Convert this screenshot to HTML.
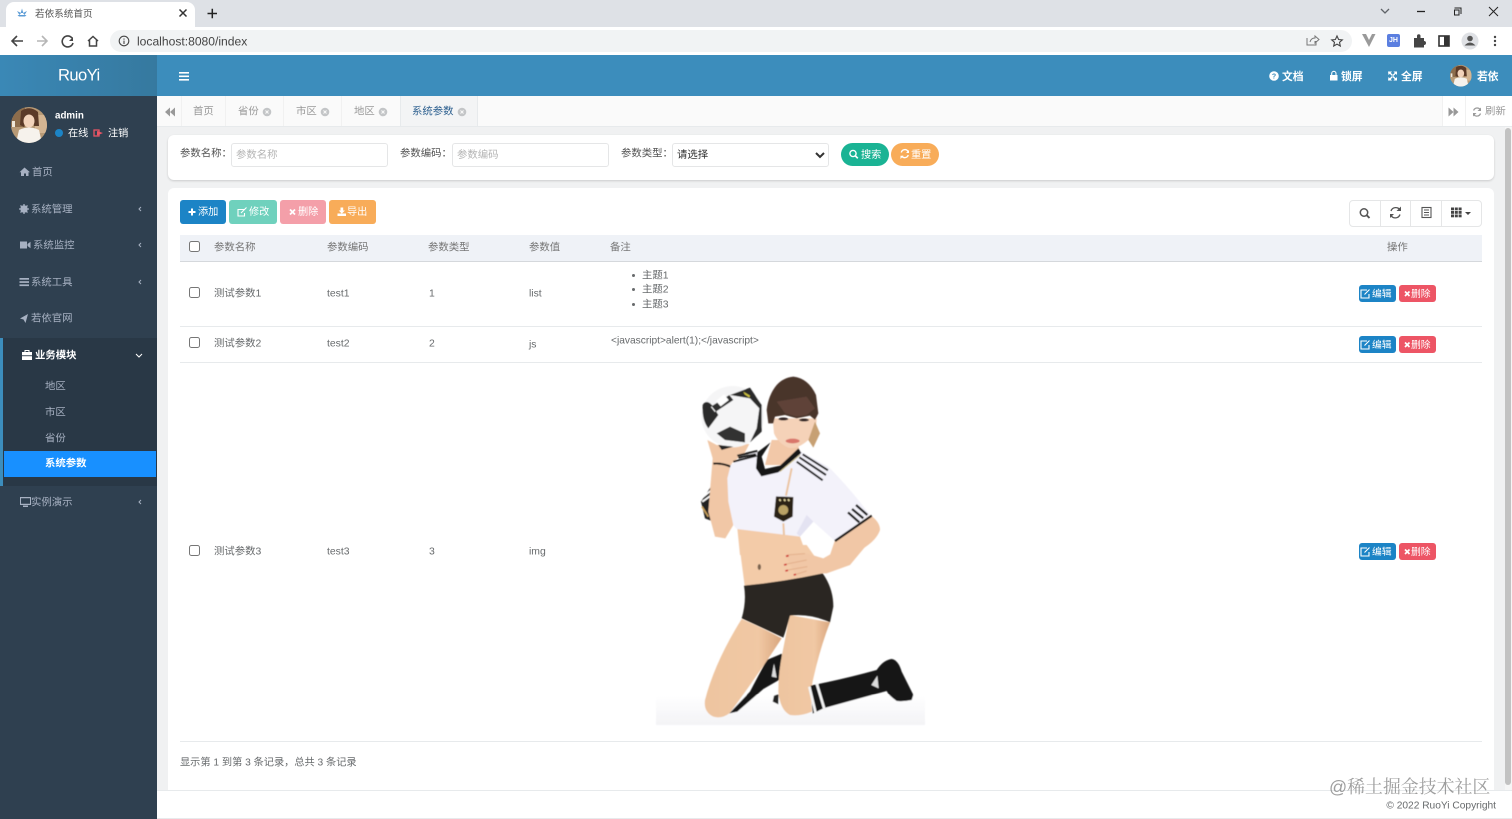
<!DOCTYPE html>
<html lang="zh"><head><meta charset="utf-8"><title>若依系统首页</title>
<style>
html,body{margin:0;padding:0;width:1512px;height:819px;overflow:hidden;background:#f0f1f2}
body{font-family:"Liberation Sans","Noto Sans CJK SC",sans-serif;font-size:10.4px;color:#676a6c;position:relative}
.b{position:absolute;box-sizing:border-box}
.t{position:absolute;transform:translateY(calc(-50% + 2.5px));white-space:nowrap;line-height:1.2}
.side{color:#a7b1c2;font-size:10.4px}
.w{color:#fff;font-weight:bold}
.wb{position:absolute;box-sizing:border-box;color:#fff;font-size:10.2px;border-radius:3px;text-align:left;white-space:nowrap;padding-top:1px}
input.i,select.i{position:absolute;box-sizing:border-box;height:24px;width:157px;border:1px solid #e5e6e7;border-radius:3px;background:#fff;font:10.4px "Liberation Sans","Noto Sans CJK SC",sans-serif;padding:0 4px;margin:0;outline:none;color:#333}
input.i::placeholder{color:#b5b5b5}
input.c{position:absolute;margin:0;width:11px;height:11px}
svg{position:absolute;left:0;top:0;pointer-events:none}
</style></head><body>

<!-- browser chrome -->
<div class="b" style="left:0;top:0;width:1512px;height:27px;background:#dee1e6"></div>
<div class="b" style="left:6px;top:2px;width:189px;height:25px;background:#fff;border-radius:8px 8px 0 0"></div>
<div class="b" style="left:0;top:27px;width:1512px;height:28px;background:#fff"></div>
<div class="b" style="left:110px;top:30px;width:1242px;height:22px;background:#f1f3f4;border-radius:11px"></div>
<div class="t" style="left:35px;top:12px;font-size:9.6px;color:#555">若依系统首页</div>
<div class="t" style="left:137px;top:38.5px;font-size:12.1px;color:#444">localhost:8080/index</div>
<div class="b" style="left:1387px;top:34px;width:13px;height:13px;background:#5b7fe0;border-radius:2px;color:#fff;font-size:7px;font-weight:bold;text-align:center;line-height:13px">JH</div>

<!-- header -->
<div class="b" style="left:0;top:55px;width:1512px;height:41px;background:#3c8dbc"></div>
<div class="b" style="left:0;top:55px;width:157px;height:41px;background:linear-gradient(90deg,#3a88b6,#36799f)"></div>
<div class="t" style="left:58px;top:73px;font-size:16.6px;color:#fff;letter-spacing:-.6px">RuoYi</div>
<div class="t w" style="left:1282px;top:75px;font-size:10.8px">文档</div>
<div class="t w" style="left:1341px;top:75px;font-size:10.8px">锁屏</div>
<div class="t w" style="left:1401px;top:75px;font-size:10.8px">全屏</div>
<div class="t w" style="left:1477px;top:75px;font-size:10.8px">若依</div>

<!-- sidebar -->
<div class="b" style="left:0;top:96px;width:157px;height:723px;background:#2f4050"></div>
<div class="b" style="left:0;top:338px;width:157px;height:148px;background:#293846;border-left:3px solid #3c8dbc"></div>
<div class="b" style="left:4px;top:451px;width:152px;height:26px;background:#1890ff"></div>
<div class="t w" style="left:55px;top:114px;font-size:9.8px">admin</div>
<div class="t" style="left:68px;top:131.500px;color:#fff;font-size:10.2px">在线</div>
<div class="t" style="left:108px;top:131.500px;color:#fff;font-size:10.2px">注销</div>
<div class="t side" style="left:32px;top:170.500px">首页</div>
<div class="t side" style="left:31px;top:207.500px">系统管理</div>
<div class="t side" style="left:33px;top:243.500px">系统监控</div>
<div class="t side" style="left:31px;top:280.500px">系统工具</div>
<div class="t side" style="left:31px;top:316.500px">若依官网</div>
<div class="t w" style="left:35px;top:353.500px;font-size:10.4px">业务模块</div>
<div class="t side" style="left:45px;top:384.500px">地区</div>
<div class="t side" style="left:45px;top:410.500px">市区</div>
<div class="t side" style="left:45px;top:436.500px">省份</div>
<div class="t w" style="left:45px;top:461.500px;font-size:10.4px">系统参数</div>
<div class="t side" style="left:31px;top:500.500px">实例演示</div>

<!-- tabs -->
<div class="b" style="left:157px;top:96px;width:1355px;height:31px;background:#fafafa;border-bottom:1px solid #e7eaec"></div>
<div class="b" style="left:400px;top:96px;width:78px;height:30px;background:#f3f4f5;border-left:1px solid #e7eaec;border-right:1px solid #e7eaec"></div>
<div class="b" style="left:181px;top:96px;width:1px;height:30px;background:#f1f1f1"></div>
<div class="b" style="left:225px;top:96px;width:1px;height:30px;background:#f1f1f1"></div>
<div class="b" style="left:283px;top:96px;width:1px;height:30px;background:#f1f1f1"></div>
<div class="b" style="left:341px;top:96px;width:1px;height:30px;background:#f1f1f1"></div>
<div class="b" style="left:1442px;top:96px;width:70px;height:30px;background:#fff;border-left:1px solid #f1f1f1"></div>
<div class="b" style="left:1465px;top:96px;width:1px;height:30px;background:#f1f1f1"></div>
<div class="t" style="left:193px;top:110px;color:#999">首页</div>
<div class="t" style="left:238px;top:110px;color:#999">省份</div>
<div class="t" style="left:296px;top:110px;color:#999">市区</div>
<div class="t" style="left:354px;top:110px;color:#999">地区</div>
<div class="t" style="left:412px;top:110px;color:#2c5f8f">系统参数</div>
<div class="t" style="left:1485px;top:110px;color:#999">刷新</div>

<!-- search card -->
<div class="b" style="left:168px;top:135px;width:1326px;height:45px;background:#fff;border-radius:6px;box-shadow:0 1px 2px rgba(0,0,0,.16)"></div>
<div class="t" style="left:180px;top:151.500px;color:#555">参数名称：</div>
<input class="i" style="left:231px;top:143px" placeholder="参数名称">
<div class="t" style="left:400px;top:151.500px;color:#555">参数编码：</div>
<input class="i" style="left:452px;top:143px" placeholder="参数编码">
<div class="t" style="left:621px;top:151.500px;color:#555">参数类型：</div>
<select class="i" style="left:672px;top:143px;padding:0"><option>请选择</option></select>
<div class="wb" style="left:841px;top:143px;width:48px;height:23px;background:#1ab394;border-radius:12px;line-height:23px;padding-left:20px">搜索</div>
<div class="wb" style="left:891px;top:143px;width:48px;height:23px;background:#f8ac59;border-radius:12px;line-height:23px;padding-left:20px">重置</div>

<!-- table card -->
<div class="b" style="left:168px;top:188px;width:1326px;height:602px;background:#fff;border-radius:6px 6px 0 0"></div>
<div class="wb" style="left:180px;top:200px;width:46px;height:24px;background:#1c84c6;line-height:24px;padding-left:18px">添加</div>
<div class="wb" style="left:229px;top:200px;width:48px;height:24px;background:#6fd1bd;line-height:24px;padding-left:20px">修改</div>
<div class="wb" style="left:280px;top:200px;width:46px;height:24px;background:#f49fa9;line-height:24px;padding-left:18px">删除</div>
<div class="wb" style="left:329px;top:200px;width:47px;height:24px;background:#f8ac59;line-height:24px;padding-left:18px">导出</div>

<div class="b" style="left:1349px;top:200px;width:133px;height:27px;border:1px solid #e5e6e7;border-radius:4px;background:#fff"></div>
<div class="b" style="left:1380px;top:200px;width:1px;height:27px;background:#e5e6e7"></div>
<div class="b" style="left:1410px;top:200px;width:1px;height:27px;background:#e5e6e7"></div>
<div class="b" style="left:1441px;top:200px;width:1px;height:27px;background:#e5e6e7"></div>

<div class="b" style="left:180px;top:235px;width:1302px;height:27px;background:#eff2f7;border-bottom:1px solid #d5d8dc"></div>
<input type="checkbox" class="c" style="left:189px;top:241px">
<div class="t" style="left:214px;top:245.500px;color:#777">参数名称</div>
<div class="t" style="left:327px;top:245.500px;color:#777">参数编码</div>
<div class="t" style="left:428px;top:245.500px;color:#777">参数类型</div>
<div class="t" style="left:529px;top:245.500px;color:#777">参数值</div>
<div class="t" style="left:610px;top:245.500px;color:#777">备注</div>
<div class="t" style="left:1387px;top:245.500px;color:#777">操作</div>

<div class="b" style="left:180px;top:326px;width:1302px;height:1px;background:#e7eaec"></div>
<div class="b" style="left:180px;top:362px;width:1302px;height:1px;background:#e7eaec"></div>
<div class="b" style="left:180px;top:741px;width:1302px;height:1px;background:#e7eaec"></div>

<input type="checkbox" class="c" style="left:189px;top:287px">
<div class="t" style="left:214px;top:291.500px">测试参数1</div>
<div class="t" style="left:327px;top:291.500px">test1</div>
<div class="t" style="left:429px;top:291.500px">1</div>
<div class="t" style="left:529px;top:291.500px">list</div>
<div class="t" style="left:642px;top:273.500px">主题1</div>
<div class="t" style="left:642px;top:287.500px">主题2</div>
<div class="t" style="left:642px;top:302.500px">主题3</div>
<div class="b" style="left:632px;top:274px;width:3px;height:3px;border-radius:50%;background:#676a6c"></div>
<div class="b" style="left:632px;top:288px;width:3px;height:3px;border-radius:50%;background:#676a6c"></div>
<div class="b" style="left:632px;top:303px;width:3px;height:3px;border-radius:50%;background:#676a6c"></div>
<div class="wb" style="left:1359px;top:285px;width:37px;height:17px;background:#1c84c6;line-height:18px;padding-left:13px;font-size:9.8px">编辑</div>
<div class="wb" style="left:1399px;top:285px;width:37px;height:17px;background:#ed5565;line-height:18px;padding-left:12px;font-size:9.8px">删除</div>

<input type="checkbox" class="c" style="left:189px;top:337px">
<div class="t" style="left:214px;top:341.500px">测试参数2</div>
<div class="t" style="left:327px;top:341.500px">test2</div>
<div class="t" style="left:429px;top:341.500px">2</div>
<div class="t" style="left:529px;top:342.500px">js</div>
<div class="t" style="left:611px;top:338.500px;font-size:10.2px">&lt;javascript&gt;alert(1);&lt;/javascript&gt;</div>
<div class="wb" style="left:1359px;top:336px;width:37px;height:17px;background:#1c84c6;line-height:18px;padding-left:13px;font-size:9.8px">编辑</div>
<div class="wb" style="left:1399px;top:336px;width:37px;height:17px;background:#ed5565;line-height:18px;padding-left:12px;font-size:9.8px">删除</div>

<input type="checkbox" class="c" style="left:189px;top:545px">
<div class="t" style="left:214px;top:549.500px">测试参数3</div>
<div class="t" style="left:327px;top:549.500px">test3</div>
<div class="t" style="left:429px;top:549.500px">3</div>
<div class="t" style="left:529px;top:549.500px">img</div>
<div class="wb" style="left:1359px;top:543px;width:37px;height:17px;background:#1c84c6;line-height:18px;padding-left:13px;font-size:9.8px">编辑</div>
<div class="wb" style="left:1399px;top:543px;width:37px;height:17px;background:#ed5565;line-height:18px;padding-left:12px;font-size:9.8px">删除</div>

<div class="t" style="left:180px;top:760.500px;font-size:10.2px">显示第 1 到第 3 条记录，总共 3 条记录</div>

<!-- footer -->
<div class="b" style="left:157px;top:790px;width:1355px;height:29px;background:#fff;border-top:1px solid #e7eaec;border-bottom:1px solid #e7eaec"></div>
<div class="t" style="right:16px;top:803.500px;font-size:10.2px;color:#676a6c">© 2022 RuoYi Copyright</div>

<!-- scrollbar -->
<div class="b" style="left:1505px;top:127px;width:7px;height:663px;background:#f6f6f6"></div>
<div class="b" style="left:1505px;top:128px;width:6px;height:657px;background:#c2c2c2;border-radius:3px"></div>

<svg width="1512" height="819" viewBox="0 0 1512 819">
<defs>
<clipPath id="cp"><circle cx="18" cy="18" r="18"/></clipPath>
<g id="av" clip-path="url(#cp)">
<rect width="36" height="36" fill="#b89a76"/>
<rect x="0" y="0" width="14" height="20" fill="#8d6d4c"/>
<rect x="24" y="8" width="12" height="18" fill="#d4b592"/>
<path d="M10 4 Q19 -2 27 5 L28 19 L23 19 L22 10 L14 10 L13 20 L9 18Z" fill="#5b3a28"/>
<ellipse cx="18" cy="14" rx="5.5" ry="6.5" fill="#f2d3bb"/>
<path d="M5 36 L8 23 Q18 18 28 23 L31 36Z" fill="#f6f2ec"/>
<rect x="1" y="14" width="3" height="6" fill="#efe8da"/>
</g>
<linearGradient id="floor" x1="0" y1="0" x2="0" y2="1"><stop offset="0" stop-color="#fff"/><stop offset="1" stop-color="#f3f3f6"/></linearGradient>
<linearGradient id="leg" x1="0" y1="0" x2="1" y2="0"><stop offset="0" stop-color="#eec5a0"/><stop offset=".7" stop-color="#f1c8a4"/><stop offset="1" stop-color="#d9a67e"/></linearGradient>
<filter id="bl"><feGaussianBlur stdDeviation=".5"/></filter>
</defs>

<!-- chrome icons -->
<g fill="none" stroke="#5f6368" stroke-width="1.3">
<path d="M179.500 9.500 L186.500 16.500 M186.500 9.500 L179.500 16.500" stroke="#333" stroke-width="1.500"/>
<path d="M207.500 13.500 H217 M212.300 8.700 V18.300" stroke="#222" stroke-width="1.5"/>
<path d="M1381 9 L1385 13 L1389 9"/>
<path d="M1417 11.500 H1425" stroke="#222"/>
<path d="M1454.500 8 H1461 V14 M1454.500 10 H1459 V15 H1454.500Z" stroke="#222" stroke-width="1"/>
<path d="M1489 7 L1498 16 M1498 7 L1489 16" stroke="#222" stroke-width="1"/>
<path d="M23 41 H12 M17 36 L12 41 L17 46" stroke="#444" stroke-width="1.6"/>
<path d="M37 41 H47 M42 36 L47 41 L42 46" stroke="#b6b6b6" stroke-width="1.6"/>
<path d="M72 38 A5.500 5.500 0 1 0 73 43" stroke="#444" stroke-width="1.6"/>
<path d="M88 41 L93 36.500 L98 41 M89.500 40 V46 H96.500 V40" stroke="#444" stroke-width="1.5"/>
<circle cx="124" cy="41" r="4.800" stroke="#444" stroke-width="1.100"/>
<path d="M1307 38 V45 H1316 V41 M1310 42 Q1311 38 1315 38 V36 L1319 39.500 L1315 43 V41" stroke="#777" stroke-width="1"/>
<path d="M1337 36 L1338.600 39.500 L1342.300 39.900 L1339.500 42.300 L1340.300 46 L1337 44.100 L1333.700 46 L1334.500 42.300 L1331.700 39.900 L1335.400 39.500Z" stroke="#444" stroke-width="1.100"/>
</g>
<path d="M73 37 V41 H69Z" fill="#444"/>
<path d="M124 38.500 V39.600 M124 40.600 V44" stroke="#444" stroke-width="1.100"/>
<g fill="#5b9bd5"><path d="M22 8.500 L23.300 13 L20.700 13Z"/><path d="M17 11 L21 13 L19.500 15 Z"/><path d="M27 11 L23 13 L24.500 15Z"/><path d="M17.500 15 H26.500 L25 16.500 H19Z"/></g>
<path d="M1362 34 L1375.500 34 L1369 47Z M1366 34 L1369 40 L1372 34Z" fill="#9a9a9a" fill-rule="evenodd"/>
<path d="M1414 38 H1417 V36 A1.700 1.700 0 0 1 1420.500 36 V38 H1424 V41 A1.700 1.700 0 0 1 1424 45 V47.500 H1414Z" fill="#444"/>
<rect x="1439" y="36" width="10" height="10" fill="none" stroke="#333" stroke-width="1.600"/><rect x="1444" y="36" width="5" height="10" fill="#333"/>
<circle cx="1470" cy="41" r="8.500" fill="#dfe1e5"/><circle cx="1470" cy="38.500" r="2.800" fill="#555"/><path d="M1464.500 45.500 Q1470 39.500 1475.500 45.500Z" fill="#555"/>
<g fill="#444"><circle cx="1495" cy="37" r="1.200"/><circle cx="1495" cy="41" r="1.200"/><circle cx="1495" cy="45" r="1.200"/></g>

<!-- header icons -->
<g fill="#fff">
<rect x="179" y="72" width="10" height="1.600"/><rect x="179" y="75.500" width="10" height="1.600"/><rect x="179" y="79" width="10" height="1.600"/>
<circle cx="1274" cy="76" r="4.800"/>
<path d="M1331 75 H1337.500 V80.500 H1330 V75Z"/>
<path d="M1388 71.500 H1392 L1390.800 72.900 L1393 75 L1392 76 L1389.800 73.800 L1388.500 75 Z M1397 71.500 H1393.500 L1394.700 72.900 L1392.500 75 L1393.500 76 L1395.700 73.800 L1397 75Z M1388 80.500 H1392 L1390.800 79.100 L1393 77 L1392 76 L1389.800 78.200 L1388.500 77Z M1397 80.500 H1393.500 L1394.700 79.100 L1392.500 77 L1393.500 76 L1395.700 78.200 L1397 77Z"/>
</g>
<path d="M1331.700 75.200 V73.500 A2 2 0 0 1 1336 73.500 V75.200" fill="none" stroke="#fff" stroke-width="1.100"/>
<text x="1274" y="78.500" text-anchor="middle" font-size="7" font-weight="bold" fill="#3c8dbc" font-family="Liberation Sans">?</text>
<use href="#av" transform="translate(1450,65) scale(.6)"/>

<!-- sidebar icons -->
<use href="#av" transform="translate(11,107)"/>
<circle cx="59" cy="133" r="4" fill="#1c84c6"/>
<path d="M94 130 H99 V136 H94 Z" fill="none" stroke="#ed5565" stroke-width="1.300"/><path d="M97 131 L103 133 L97 135.500 Z" fill="#ed5565"/>
<g fill="#a7b1c2">
<path d="M24.500 167.500 L19.500 172.300 H21 V176 H24 V173.500 H26 V176 H28.500 V172.300 H30Z"/>
<circle cx="24" cy="209" r="3.700"/><g stroke="#a7b1c2" stroke-width="1.300"><path d="M24 204 V214 M19 209 H29 M20.500 205.500 L27.500 212.500 M27.500 205.500 L20.500 212.500"/></g>
<path d="M20 241.500 H27 V248.500 H20Z M27.500 244 L30.500 241.800 V248.200 L27.500 246Z"/>
<rect x="19.500" y="278" width="9.500" height="1.700"/><rect x="19.500" y="281.200" width="9.500" height="1.700"/><rect x="19.500" y="284.400" width="9.500" height="1.700"/>
<path d="M28 314 L20 318.500 L23.500 319.500 L25.500 323Z"/>
<path d="M20 497 H31 V505 H20Z M21 498.300 H30 V503.700 H21Z" fill-rule="evenodd"/><path d="M23 505.500 H28 V507 H23Z"/>
</g>
<g fill="none" stroke="#a7b1c2" stroke-width="1">
<path d="M141 207 L139 209 L141 211"/><path d="M141 243 L139 245 L141 247"/><path d="M141 280 L139 282 L141 284"/><path d="M141 500 L139 502 L141 504"/>
<path d="M136 354 L139 357 L142 354" stroke="#fff"/>
</g>
<path d="M22 352 H32 V360 H22Z" fill="#fff"/><path d="M25 352 V350.500 H29 V352" stroke="#fff" fill="none"/><rect x="22" y="355.300" width="10" height=".9" fill="#293846"/>

<!-- tab icons -->
<g fill="#999">
<path d="M170 107.500 V116.500 L165 112Z M175 107.500 V116.500 L170 112Z"/>
<path d="M1448.500 107.500 V116.500 L1453.500 112Z M1453.500 107.500 V116.500 L1458.500 112Z"/>
</g>
<g fill="#c3c5c7"><circle cx="267" cy="112" r="4.300"/><circle cx="325" cy="112" r="4.300"/><circle cx="383" cy="112" r="4.300"/><circle cx="462" cy="112" r="4.300"/></g>
<g stroke="#fafafa" stroke-width="1"><path d="M265.500 110.500 L268.500 113.500 M268.500 110.500 L265.500 113.500"/><path d="M323.500 110.500 L326.500 113.500 M326.500 110.500 L323.500 113.500"/><path d="M381.500 110.500 L384.500 113.500 M384.500 110.500 L381.500 113.500"/><path d="M460.500 110.500 L463.500 113.500 M463.500 110.500 L460.500 113.500"/></g>
<g fill="none" stroke="#999" stroke-width="1.200"><path d="M1480.500 110 A3.800 3.800 0 0 0 1473.600 110.500 M1473.500 114 A3.800 3.800 0 0 0 1480.500 113.500"/></g>
<path d="M1481 107.500 V111 H1477.500Z M1473 116.500 V113 H1476.500Z" fill="#999"/>

<!-- button icons -->
<g fill="none" stroke="#fff" stroke-width="1.400">
<circle cx="853" cy="153.500" r="3.100"/><path d="M855.300 155.800 L857.800 158.300" stroke-width="1.700"/>
<path d="M908 151.500 A3.600 3.600 0 0 0 901.300 152.500 M901.700 156 A3.600 3.600 0 0 0 908.200 155"/>
<path d="M188.500 212 H195.500 M192 208.500 V215.500" stroke-width="2"/>
<path d="M245 209.500 H238 V216 H244.500 V213 M241 213 L246.500 207.500" stroke-width="1.100"/>
<path d="M290 209.500 L295 214.500 M295 209.500 L290 214.500" stroke-width="1.800"/>
<path d="M1367 290 H1361 V298 H1369 V294 M1364.500 294.500 L1369.500 289.500" stroke-width="1.100"/>
<path d="M1367 341 H1361 V349 H1369 V345 M1364.500 345.500 L1369.500 340.500" stroke-width="1.100"/>
<path d="M1367 548 H1361 V556 H1369 V552 M1364.500 552.500 L1369.500 547.500" stroke-width="1.100"/>
<path d="M1405 291.500 L1409.500 296 M1409.500 291.500 L1405 296" stroke-width="1.700"/>
<path d="M1405 342.500 L1409.500 347 M1409.500 342.500 L1405 347" stroke-width="1.700"/>
<path d="M1405 549.500 L1409.500 554 M1409.500 549.500 L1405 554" stroke-width="1.700"/>
</g>
<path d="M909 150 V153 H906Z M900.500 159 V155.700 H903.500Z" fill="#fff"/>
<path d="M337.500 213.500 H346 V216 H337.500Z M340.500 207.500 H343.200 V210.500 H345 L341.800 213.600 L338.700 210.500 H340.500Z" fill="#fff"/>

<!-- toolbar icons -->
<g fill="none" stroke="#555">
<circle cx="1364" cy="212.500" r="3.700" stroke-width="1.500"/><path d="M1366.800 215.300 L1369.500 218" stroke-width="1.900"/>
<path d="M1400 210 A5 5 0 0 0 1391 211 M1391 215.500 A5 5 0 0 0 1400 214.500" stroke-width="1.300"/>
<rect x="1422" y="207.500" width="9" height="10" stroke-width="1.100"/><path d="M1424 210 H1429 M1424 212.500 H1429 M1424 215 H1429" stroke-width="1"/>
</g>
<path d="M1401 206.500 V211 H1396.500Z M1390 218 V214 H1394Z" fill="#555"/>
<g fill="#444"><rect x="1451" y="207.500" width="3" height="2.800"/><rect x="1454.800" y="207.500" width="3" height="2.800"/><rect x="1458.600" y="207.500" width="3" height="2.800"/><rect x="1451" y="211" width="3" height="2.800"/><rect x="1454.800" y="211" width="3" height="2.800"/><rect x="1458.600" y="211" width="3" height="2.800"/><rect x="1451" y="214.500" width="3" height="2.800"/><rect x="1454.800" y="214.500" width="3" height="2.800"/><rect x="1458.600" y="214.500" width="3" height="2.800"/><path d="M1465 212 H1471 L1468 215Z"/></g>

<!-- photo -->
<g filter="url(#bl)">
<rect x="656" y="695" width="269" height="30" fill="url(#floor)"/>
<g transform="translate(650,365) scale(.33333)">
  <!-- back sleeve -->
  <path d="M153 410 L185 362 L190 470 L165 460Z" fill="#222"/>
  <path d="M160 395 L185 375 M157 410 L182 392" stroke="#fff" stroke-width="5"/>
  <path d="M156 425 L175 455" stroke="#c9a05c" stroke-width="5"/>
  <!-- raised arm -->
  <path d="M172 225 L200 240 L298 237 L285 262 L245 295 L236 400 L250 480 L226 520 L195 515 L175 440 L188 280Z" fill="#f1c7a6"/>
  <path d="M190 296 Q215 293 242 305" stroke="#111" stroke-width="6" fill="none"/>
  <!-- ball -->
  <ellipse cx="248" cy="155" rx="94" ry="92" fill="#f5f5f6"/>
  <path d="M158 120 Q170 100 190 125 L205 150 L175 190 Q155 165 158 120Z" fill="#2b2b2b"/>
  <path d="M200 205 L240 185 L285 205 L285 232 L225 225Z" fill="#333"/>
  <path d="M240 90 L300 68 L335 120 L335 200 L300 232 L320 190 L328 130 L300 100Z" fill="#2b2b2b"/>
  <path d="M178 128 L238 90 L250 105 L190 145Z" fill="#2e2e2e"/>
  <path d="M184 125 L196 140 M200 108 L222 90 L234 105 L212 122Z" stroke="#fff" stroke-width="3" fill="#fff"/>
  <path d="M280 80 L300 92 L298 98 L284 88Z" fill="#cfc43f"/>
  <path d="M205 240 L250 245 L215 255Z" fill="#222"/>
  <!-- right arm -->
  <path d="M660 450 Q690 470 690 495 Q680 525 640 550 L590 570 L540 570 L555 525Z" fill="#f1c7a6"/>
  <!-- waist -->
  <path d="M262 490 L448 510 L470 570 L270 570Z" fill="#f3cba8"/>
  <path d="M410 570 L440 563 L465 570Z" fill="#c94040"/>
  <!-- neck -->
  <path d="M365 225 L440 225 L450 262 L395 300 L345 300Z" fill="#f2c8a8"/>
  <!-- shirt -->
  <path d="M242 300 L320 255 L345 315 L395 300 L450 258 L535 305 Q600 370 660 450 L555 528 L490 470 L450 515 L260 492 L250 480 L235 410 L232 340Z" fill="#f3f2fa"/>
  <path d="M490 470 L450 515 L440 505 L470 450Z" fill="#e4e3f2"/>
  <!-- collar -->
  <path d="M362 232 L322 262 L318 310 L334 334 L385 322 L454 264 L445 250 L390 302 L345 312 L335 275Z" fill="#141414"/>
  <path d="M390 320 L450 270" stroke="#c9b45a" stroke-width="2"/>
  <!-- shoulder stripes -->
  <g stroke="#161616" stroke-width="6"><path d="M440 290 L518 346"/><path d="M448 277 L528 330"/><path d="M458 268 L534 316"/><path d="M262 272 L322 258"/><path d="M265 278 L318 268"/><path d="M250 290 L320 272"/></g>
  <!-- sleeve stripes -->
  <g stroke="#161616" stroke-width="7"><path d="M594 442 L628 472"/><path d="M606 432 L640 460"/><path d="M618 420 L652 450"/></g>
  <path d="M555 528 L665 452" stroke="#161616" stroke-width="7"/>
  <!-- crest -->
  <path d="M378 394 L430 396 L428 455 L400 470 L372 455Z" fill="#2a2318"/>
  <circle cx="400" cy="435" r="15" fill="#b9a265"/>
  <path d="M388 403 L392 408 M402 403 L406 408 M414 403 L418 408" stroke="#e9dca2" stroke-width="5"/>
  <path d="M425 310 L408 392 M400 475 L402 510" stroke="#ebc5a0" stroke-width="6"/>
  <!-- face/hair -->
  <path d="M368 160 L500 160 Q500 200 475 225 Q440 255 415 248 Q385 235 372 205Z" fill="#f5d2b8"/>
  <path d="M430 35 Q400 38 380 60 Q355 90 350 135 L355 175 L370 175 L375 155 L405 150 L440 160 L480 152 L495 165 L505 145 L498 90 Q475 40 430 35Z" fill="#4a342c"/>
  <path d="M380 110 L470 95 L495 130 L470 150 L440 155 L405 145Z" fill="#5e4237"/>
  <path d="M495 170 L510 205 L490 248 L475 225Z" fill="#c7a073"/>
  <ellipse cx="400" cy="162" rx="15" ry="4.500" fill="#2d2120"/><ellipse cx="462" cy="165" rx="15" ry="4.500" fill="#2d2120"/>
  <ellipse cx="428" cy="228" rx="21" ry="7" fill="#d9766b"/>
</g>
<g transform="translate(650,545) scale(.33333)">
  <!-- torso low -->
  <path d="M268 0 L470 0 L505 50 L520 90 L285 130 Z" fill="#f3cba8"/>
  <!-- arm and hand -->
  <path d="M405 30 L470 25 L520 40 L590 0 L650 0 L600 60 L530 85 L500 85 L440 95Z" fill="#f1c7a6"/>
  <path d="M410 30 L465 26 M405 58 L470 45 M408 76 L472 65 M432 90 L470 78" stroke="#e3b08c" stroke-width="3"/>
  <g stroke="#cf3030" stroke-width="5"><path d="M408 34 L416 32"/><path d="M402 60 L410 58"/><path d="M406 78 L414 76"/><path d="M431 90 L438 88"/></g>
  <ellipse cx="328" cy="66" rx="5" ry="9" fill="#7a6350"/>
  <!-- back socks -->
  <path d="M396 326 L392 402 L340 432 L262 500 L238 505 L300 440 L350 345Z" fill="#141414"/>
  <path d="M372 355 L380 398 L365 395Z" fill="#ddd"/>
  <path d="M372 452 L386 448 L385 478 L368 470Z" fill="#222"/>
  <!-- left thigh -->
  <path d="M275 222 Q340 250 395 280 Q350 350 300 420 Q265 470 238 505 Q215 522 190 515 Q160 500 165 465 Q195 350 275 222Z" fill="url(#leg)"/>
  <!-- right leg -->
  <path d="M418 210 L540 232 Q510 310 490 400 Q480 440 486 500 Q450 515 420 510 Q390 495 385 440 Q385 380 398 320 Q410 260 418 210Z" fill="url(#leg)"/>
  <!-- shorts -->
  <path d="M282 122 Q400 110 518 85 Q550 130 550 185 L540 232 Q480 205 420 212 Q410 250 400 278 Q340 250 275 220 Q290 170 282 122Z" fill="#2a2623"/>
  <!-- front sock -->
  <path d="M482 422 Q590 400 680 375 Q700 345 725 342 Q745 345 755 380 Q775 420 790 450 L785 465 Q760 470 740 468 Q715 450 710 438 Q610 465 520 490 L488 506Z" fill="#131313"/>
  <path d="M478 425 L497 505 M500 415 L524 495" stroke="#f4f4f4" stroke-width="8"/>
  <path d="M664 420 L682 392 L686 430Z" fill="#ddd"/>
</g>
</g>
</svg>

<div class="t" style="left:1329px;top:784.500px;font-size:17.9px;color:rgba(120,120,120,.72);font-family:'Liberation Sans','Noto Serif CJK SC',sans-serif">@稀土掘金技术社区</div>
</body></html>
